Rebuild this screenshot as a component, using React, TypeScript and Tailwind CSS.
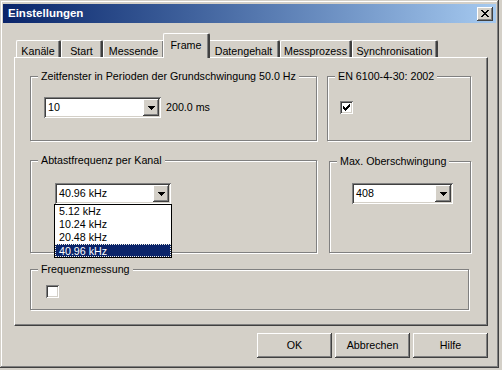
import React from "react";

// Win2000-style 3D edges
const raised =
  "shadow-[inset_-1px_-1px_0_#404040,inset_1px_1px_0_#ffffff,inset_-2px_-2px_0_#808080]";
const sunken =
  "shadow-[inset_1px_1px_0_#808080,inset_-1px_-1px_0_#ffffff,inset_2px_2px_0_#404040,inset_-2px_-2px_0_#d4d0c8]";
const etched =
  "border border-[#808080] shadow-[inset_1px_1px_0_#ffffff,1px_1px_0_#ffffff]";

function DownArrow() {
  return (
    <svg width="7" height="4" viewBox="0 0 7 4" shapeRendering="crispEdges">
      <rect x="0" y="0" width="7" height="1" fill="#000" />
      <rect x="1" y="1" width="5" height="1" fill="#000" />
      <rect x="2" y="2" width="3" height="1" fill="#000" />
      <rect x="3" y="3" width="1" height="1" fill="#000" />
    </svg>
  );
}

function Combo({
  value,
  width,
  children,
}: {
  value: string;
  width: string;
  children?: React.ReactNode;
}) {
  return (
    <div className={`relative ${width} h-[21px] bg-white ${sunken} flex items-center`}>
      <span className="pl-[4px] flex-1 leading-none">{value}</span>
      <div
        className={`mr-[2px] w-[16px] h-[17px] bg-[#d4d0c8] ${raised} flex items-center justify-center`}
      >
        <DownArrow />
      </div>
      {children}
    </div>
  );
}

function Check({ checked }: { checked?: boolean }) {
  return (
    <div className={`w-[13px] h-[13px] bg-white ${sunken} flex items-center justify-center`}>
      {checked && (
        <svg width="7" height="7" viewBox="0 0 7 7" shapeRendering="crispEdges">
          <rect x="6" y="0" width="1" height="3" fill="#000" />
          <rect x="5" y="1" width="1" height="3" fill="#000" />
          <rect x="4" y="2" width="1" height="3" fill="#000" />
          <rect x="3" y="3" width="1" height="3" fill="#000" />
          <rect x="2" y="4" width="1" height="3" fill="#000" />
          <rect x="1" y="3" width="1" height="3" fill="#000" />
          <rect x="0" y="2" width="1" height="3" fill="#000" />
        </svg>
      )}
    </div>
  );
}

function Group({
  label,
  className,
  children,
}: {
  label: string;
  className: string;
  children?: React.ReactNode;
}) {
  return (
    <div className={`relative ${etched} ${className}`}>
      <span className="absolute left-[7px] top-[-8px] px-[3px] bg-[#d4d0c8] leading-[14px] whitespace-nowrap">
        {label}
      </span>
      {children}
    </div>
  );
}

const tabs = [
  { label: "Kanäle", w: "w-[45px]" },
  { label: "Start", w: "w-[42px]" },
  { label: "Messende", w: "w-[62px]" },
  { label: "Frame", w: "w-[40px]", active: true },
  { label: "Datengehalt", w: "w-[72px]" },
  { label: "Messprozess", w: "w-[72px]" },
  { label: "Synchronisation", w: "w-[86px]" },
];

const freqs = ["5.12 kHz", "10.24 kHz", "20.48 kHz", "40.96 kHz"];

function Button({ label }: { label: string }) {
  return (
    <div
      className={`w-[75px] h-[25px] bg-[#d4d0c8] ${raised} flex items-center justify-center`}
    >
      {label}
    </div>
  );
}

export default function App() {
  return (
    <div className="w-[502px] h-[370px] bg-[#d4d0c8] text-[10.7px] text-black font-['Liberation_Sans',Arial,sans-serif]">
      <div
        className={`w-[499px] h-[368px] bg-[#d4d0c8] shadow-[inset_-1px_-1px_0_#404040,inset_1px_1px_0_#d4d0c8,inset_-2px_-2px_0_#808080,inset_2px_2px_0_#ffffff] p-[3px] pt-[4px]`}
      >
        {/* Title bar */}
        <div className="h-[19px] bg-gradient-to-r from-[#0a246a] to-[#a6caf0] flex items-center pl-[5px] pr-[3px]">
          <span className="text-white font-bold text-[11.5px] leading-none">Einstellungen</span>
          <div
            className={`ml-auto w-[16px] h-[14px] bg-[#d4d0c8] ${raised} flex items-center justify-center`}
          >
            <svg width="8" height="7" viewBox="0 0 8 7" shapeRendering="crispEdges">
              <path d="M0 0h2v1H0zM6 0h2v1H6zM1 1h2v1H1zM5 1h2v1H5zM2 2h4v1H2zM3 3h2v1H3zM2 4h4v1H2zM1 5h2v1H1zM5 5h2v1H5zM0 6h2v1H0zM6 6h2v1H6z" fill="#000" />
            </svg>
          </div>
        </div>

        {/* Tabs */}
        <div className="ml-[13px] mt-[14px] flex items-end h-[21px] relative z-10">
          {tabs.map((t) =>
            t.active ? (
              <div
                key={t.label}
                className={`${t.w} box-content px-[2px] -mx-[2px] h-[21px] bg-[#d4d0c8] border-l border-t border-white border-r-2 border-r-[#404040] shadow-[inset_-1px_0_0_#808080] rounded-t-[2px] flex justify-center pt-[3px] relative z-20`}
              >
                {t.label}
              </div>
            ) : (
              <div
                key={t.label}
                className={`${t.w} h-[17px] mb-[1px] bg-[#d4d0c8] border-l border-t border-white border-r-2 border-r-[#404040] shadow-[inset_-1px_0_0_#808080] rounded-t-[2px] flex justify-center pt-[2px]`}
              >
                {t.label}
              </div>
            )
          )}
        </div>

        {/* Tab panel */}
        <div className="ml-[11px] -mt-[1px] w-[474px] h-[269px] border-l border-t border-white border-r border-b border-r-[#404040] border-b-[#404040] shadow-[inset_-1px_-1px_0_#808080] pt-[18px] pl-[15px]">
          <div className="flex">
            <Group label="Zeitfenster in Perioden der Grundschwingung 50.0 Hz" className="w-[287px] h-[65px]">
              <div className="flex items-center mt-[20px] ml-[13px]">
                <Combo value="10" width="w-[117px]" />
                <span className="ml-[5px]">200.0 ms</span>
              </div>
            </Group>
            <Group label="EN 6100-4-30: 2002" className="ml-[10px] w-[144px] h-[65px]">
              <div className="mt-[24px] ml-[12px]">
                <Check checked />
              </div>
            </Group>
          </div>

          <div className="flex items-end mt-[19px]">
            <Group label="Abtastfrequenz per Kanal" className="w-[287px] h-[93px] z-10">
              <div className="mt-[22px] ml-[24px]">
                <Combo value="40.96 kHz" width="w-[116px]">
                  <div className="absolute left-[-1px] top-[21px] w-[118px] bg-white border border-black">
                    {freqs.map((f, i) =>
                      i === 3 ? (
                        <div
                          key={f}
                          className="h-[13px] leading-[12px] pl-[3px] bg-[#0a246a] text-white border border-dotted border-[#f4f1e0]"
                        >
                          {f}
                        </div>
                      ) : (
                        <div key={f} className="h-[13px] leading-[13px] pl-[4px]">
                          {f}
                        </div>
                      )
                    )}
                  </div>
                </Combo>
              </div>
            </Group>
            <Group label="Max. Oberschwingung" className="ml-[12px] w-[142px] h-[92px]">
              <div className="mt-[21px] ml-[22px]">
                <Combo value="408" width="w-[101px]" />
              </div>
            </Group>
          </div>

          <Group label="Frequenzmessung" className="mt-[16px] w-[439px] h-[41px]">
            <div className="mt-[15px] ml-[15px]">
              <Check />
            </div>
          </Group>
        </div>

        {/* Buttons */}
        <div className="flex justify-end gap-[3px] mt-[7px] mr-[8px]">
          <Button label="OK" />
          <Button label="Abbrechen" />
          <Button label="Hilfe" />
        </div>
      </div>
    </div>
  );
}
